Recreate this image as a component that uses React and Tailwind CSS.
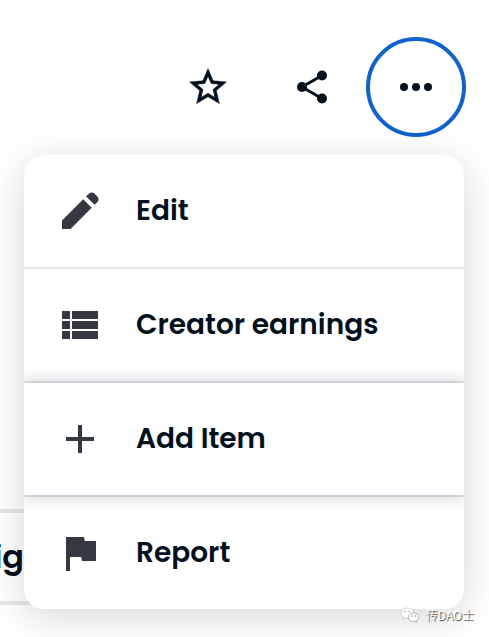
import clsx from "clsx";
import { MdAdd, MdFlag } from "react-icons/md";

const StarIcon = () => (
  <svg viewBox="0 0 24 24" className="size-11" fill="currentColor" stroke="currentColor" strokeWidth=".3" aria-hidden="true">
    <path d="M22 9.24l-7.19-.62L12 2 9.19 8.63 2 9.24l5.46 4.73L5.82 21 12 17.27 18.18 21l-1.63-7.03L22 9.24zM12 15.4l-3.76 2.27 1-4.28-3.32-2.88 4.38-.38L12 6.1l1.71 4.04 4.38.38-3.32 2.88 1 4.28L12 15.4z" />
  </svg>
);

const ShareIcon = () => (
  <svg viewBox="0 0 40 40" className="size-10" aria-hidden="true">
    <path d="M30 8.5 10 20l20 11.5" fill="none" stroke="currentColor" strokeWidth="3" />
    <circle cx="30" cy="8.5" r="5" fill="currentColor" />
    <circle cx="10" cy="20" r="5" fill="currentColor" />
    <circle cx="30" cy="31.5" r="5" fill="currentColor" />
  </svg>
);

const DotsIcon = () => (
  <svg viewBox="0 0 40 40" className="size-10" fill="currentColor" aria-hidden="true">
    <circle cx="8" cy="20" r="4" />
    <circle cx="20" cy="20" r="4" />
    <circle cx="32" cy="20" r="4" />
  </svg>
);

const PencilIcon = ({ className }) => (
  <svg viewBox="0 0 24 24" className={className} fill="currentColor" aria-hidden="true">
    <path d="m19.3 8.925-4.25-4.2 1.4-1.4q.575-.575 1.413-.575.837 0 1.412.575l1.4 1.4q.575.575.6 1.388.025.812-.55 1.387ZM17.85 10.4 7.25 21H3v-4.25l10.6-10.6Z" />
  </svg>
);

const ListIcon = ({ className }) => (
  <svg viewBox="0 0 24 24" className={className} fill="currentColor" aria-hidden="true">
    <path d="M3 14h4v-4H3v4zm0 5h4v-4H3v4zM3 9h4V5H3v4zm5 5h13v-4H8v4zm0 5h13v-4H8v4zM8 5v4h13V5H8z" />
  </svg>
);

const ChatLogo = () => (
  <svg viewBox="0 0 20 16" className="h-4 w-5" aria-hidden="true">
    <path d="M7.2 1C3.7 1 1 3.2 1 6c0 1.6.9 3 2.3 3.9L2.8 12l2.3-1.2c.7.2 1.4.2 2.1.2 3.4 0 6.2-2.2 6.2-5S10.6 1 7.2 1z" fill="#fff" stroke="#aaa" strokeWidth=".5" />
    <path d="M13.5 6C10.6 6 8.3 7.9 8.3 10.3s2.3 4.3 5.2 4.3c.6 0 1.2-.1 1.7-.2l1.9 1-.5-1.7c1.3-.8 2.1-2 2.1-3.4C18.7 7.9 16.4 6 13.5 6z" fill="#fff" stroke="#888" strokeWidth=".6" />
    <g fill="#888">
      <circle cx="5" cy="4.5" r=".7" />
      <circle cx="9.2" cy="4.5" r=".7" />
      <circle cx="11.8" cy="9" r=".7" />
      <circle cx="15.2" cy="9" r=".7" />
    </g>
  </svg>
);

const actions = [
  { label: "Favorite", icon: StarIcon },
  { label: "Share", icon: ShareIcon },
  { label: "More", icon: DotsIcon, active: true },
];

const menuItems = [
  { label: "Edit", icon: PencilIcon },
  { label: "Creator earnings", icon: ListIcon },
  { label: "Add Item", icon: MdAdd, active: true },
  { label: "Report", icon: MdFlag },
];

export default function App() {
  return (
    <main className="relative min-h-screen overflow-hidden bg-white pt-[37px] font-['Poppins','Inter',sans-serif] text-[#04111d]">
      <div className="flex justify-end gap-1 pr-[23px]">
        {actions.map(({ label, icon: Icon, active }) => (
          <button
            key={label}
            type="button"
            aria-label={label}
            className={clsx(
              "flex size-[100px] items-center justify-center rounded-full border-4",
              active ? "border-[#1062cc]" : "border-transparent"
            )}
          >
            <Icon />
          </button>
        ))}
      </div>

      <div className="mt-[18px] grid">
        {/* Tab bar that the menu opens over */}
        <div className="col-start-1 row-start-1 mb-1 flex h-24 w-1/4 items-center self-end border-y-4 border-[#e5e8eb]">
          <span className="flex w-6 justify-end text-[32px] font-semibold">ig</span>
        </div>

        <ul className="z-10 col-start-1 row-start-1 mr-[25px] ml-6 flex flex-col gap-0.5 overflow-hidden rounded-[20px] bg-[#e5e8eb] shadow-[0_8px_40px_rgba(0,0,0,0.16)]">
          {menuItems.map(({ label, icon: Icon, active }) => (
            <li key={label} className={clsx(active && "relative z-10 shadow-[0_0_16px_rgba(4,17,29,0.25)]")}>
              <button
                type="button"
                className={clsx(
                  "flex h-28 w-full items-center gap-8 px-8 text-left text-[28px] font-semibold",
                  active ? "bg-[#fbfdff]" : "bg-white"
                )}
              >
                <Icon className="size-12 shrink-0 text-[#353840]" />
                {label}
              </button>
            </li>
          ))}
        </ul>
      </div>

      <div className="absolute right-[15px] bottom-3 z-20 flex items-center gap-1.5 font-['Noto_Sans_CJK_SC',sans-serif] text-xs leading-5 text-white [text-shadow:1px_1px_1px_#444]">
        <ChatLogo />
        传DAO士
      </div>
    </main>
  );
}
